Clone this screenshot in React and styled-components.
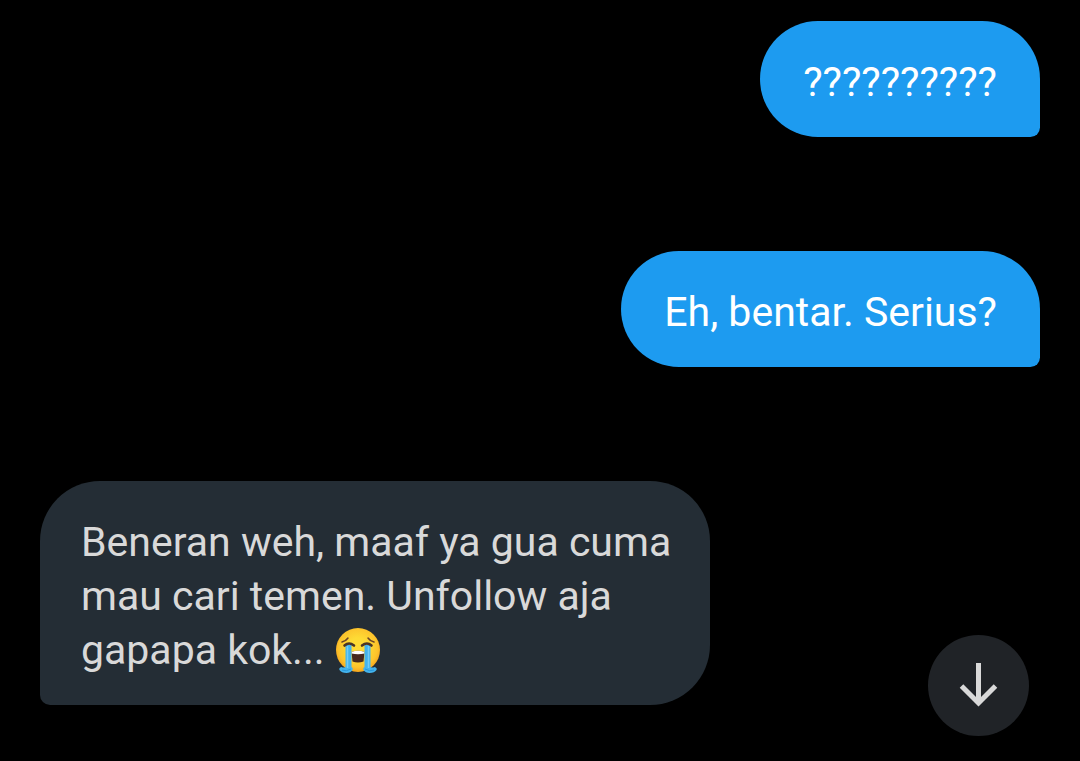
import React from "react"
import styled, { createGlobalStyle } from "styled-components"

const GlobalStyle = createGlobalStyle`
  body {
    margin: 0;
    background: #000;
  }
`

const Conversation = styled.main`
  display: flex;
  flex-direction: column;
  gap: 114px;
  padding: 21px 40px 56px;
  font-family: Roboto, "Noto Sans", sans-serif;
  font-size: 41px;
  line-height: 54px;
`

const Bubble = styled.p`
  box-sizing: border-box;
  max-width: 67%;
  margin: 0;
  padding: ${({ $sent }) => ($sent ? "34px 43px 28px" : "34px 38px 28px 41px")};
  align-self: ${({ $sent }) => ($sent ? "flex-end" : "flex-start")};
  border-radius: ${({ $sent }) =>
    $sent ? "60px 60px 10px 60px" : "60px 60px 60px 10px"};
  background: ${({ $sent }) => ($sent ? "#1d9bf0" : "#242d35")};
  color: ${({ $sent }) => ($sent ? "#fff" : "#d9d9d9")};
`

const Emoji = styled.svg`
  width: 46px;
  height: 46px;
  vertical-align: -10px;
`

const ScrollButton = styled.button`
  position: fixed;
  right: 51px;
  bottom: 25px;
  display: flex;
  align-items: center;
  justify-content: center;
  width: 101px;
  height: 101px;
  padding: 0;
  border: 0;
  border-radius: 50%;
  background: #202327;
  color: #d9d9d9;
  cursor: pointer;
`

const ArrowIcon = styled.svg`
  width: 47px;
  height: 47px;
`

function CryingFace() {
  return (
    <Emoji viewBox="0 0 46 46" role="img" aria-label="Loudly crying face">
      <defs>
        <radialGradient id="face" cx="50%" cy="45%" r="55%">
          <stop offset="0.4" stopColor="#fedb35" />
          <stop offset="0.8" stopColor="#fdc42c" />
          <stop offset="1" stopColor="#f5a51d" />
        </radialGradient>
      </defs>
      <circle cx="23" cy="22" r="22" fill="url(#face)" />
      <path
        d="M7 14q4-1 6-4M39 14q-4-1-6-4"
        fill="none"
        stroke="#6b4528"
        strokeWidth="1.5"
        strokeLinecap="round"
      />
      <path
        d="M16.5 24q6.500-2.500 13 0l-1 9.500q-5.500 2-11 0z"
        fill="#46291f"
      />
      <path d="M16.5 24q6.5-2.5 13 0v1.5q-6.5 1.5-13 0z" fill="#fff" />
      <path
        d="M10.5 17h6v22q2 1 1 3-2 3-6 3-5 0-7-3-1-2 2-3 2 1 4 0zM35.5 17h-6v22q-2 1-1 3 2 3 6 3 5 0 7-3 1-2-2-3-2 1-4 0z"
        fill="#43b3ed"
      />
      <path
        d="M12.5 18v22M33.5 18v22"
        fill="none"
        stroke="#71cdf7"
        strokeWidth="1.5"
      />
      <path
        d="M7 42q4 2 9-1M39 42q-4 2-9-1"
        fill="none"
        stroke="#2797da"
        strokeWidth="1"
      />
      <path
        d="M9.500 17.500q4.500-4 9.500 0M27 17.500q5-4 9.500 0"
        fill="none"
        stroke="#4b3526"
        strokeWidth="2.6"
        strokeLinecap="round"
      />
    </Emoji>
  )
}

function App() {
  return (
    <>
      <GlobalStyle />
      <Conversation>
        <Bubble $sent>??????????</Bubble>
        <Bubble $sent>Eh, bentar. Serius?</Bubble>
        <Bubble>
          Beneran weh, maaf ya gua cuma mau cari temen. Unfollow aja gapapa
          kok... <CryingFace />
        </Bubble>
      </Conversation>
      <ScrollButton type="button" aria-label="Scroll to latest message">
        <ArrowIcon viewBox="0 0 47 47" aria-hidden="true">
          <path
            d="M23.5 1v40M6.5 24l17 17 17-17"
            fill="none"
            stroke="currentColor"
            strokeWidth="5"
          />
        </ArrowIcon>
      </ScrollButton>
    </>
  )
}

export default App
